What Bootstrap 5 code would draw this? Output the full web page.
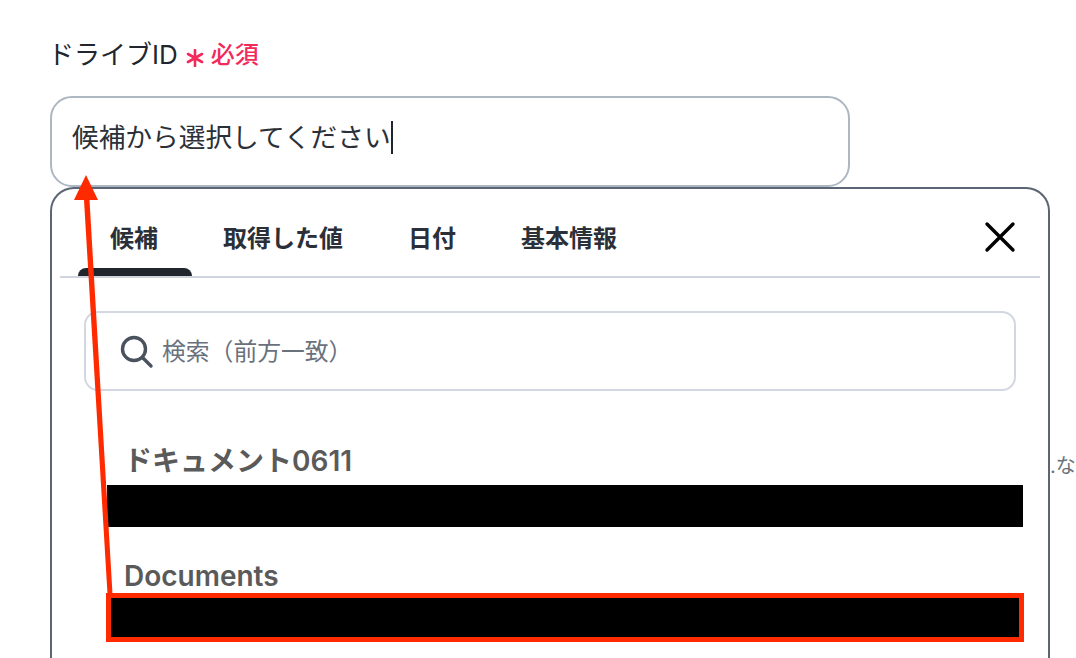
<!DOCTYPE html>
<html lang="ja">
<head>
  <meta charset="UTF-8" />
  <title>ドライブID</title>
  <link href="https://cdn.jsdelivr.net/npm/bootstrap@5.3.3/dist/css/bootstrap.min.css" rel="stylesheet" />
  <style>
    html, body { height: 658px; overflow: hidden; }
    body {
      background: #fff;
      font-family: Inter, "Noto Sans CJK JP", sans-serif;
      color: #21262e;
      position: relative;
    }
    .page-wrap { padding: 37px 0 0 50px; height: 658px; overflow: hidden; }
    .field-label { font-size: 26px; line-height: 36px; height: 36px; margin: 0 0 23px -2px; gap: 8px; }
    .req-mark { color: #f2295b; font-size: 24px; font-weight: 500; gap: 7px; }
    .req-star { width: 18px; height: 18px; margin-top: 6px; }
    .fake-input {
      width: 800px; height: 91px;
      border: 2px solid #adb7c2; border-radius: 22px;
      padding: 0 20px 8px;
      font-size: 26.7px; color: #2b3038;
    }
    .fake-caret { width: 2px; height: 33px; background: #21262e; }
    .picker-panel {
      width: 1000px; flex: none; height: 520px;
      border: 2px solid #5b6573; border-radius: 24px 24px 0 0;
      border-bottom: 0;
      padding: 0 8px;
      position: relative; z-index: 1;
    }
    .tab-bar { height: 89px; border-bottom: 2px solid #d0d4de; padding-left: 18px; }
    .tab-item {
      font-size: 24px; font-weight: 700; color: #2b3038;
      padding: 30px 33px 0 32px; height: 87px; line-height: 40px; text-align: center;
    }
    .tab-item.is-on { position: relative; padding-right: 34px; margin-right: -1px; }
    .tab-item.is-on::after {
      content: ""; position: absolute; left: 0; right: 0; bottom: 0; height: 8px;
      background: #21262e; border-radius: 8px 8px 0 0;
    }
    .tab-close { width: 32px; height: 32px; margin: 32px 24px 0 auto; }
    .search-box {
      height: 80px; margin: 33px 24px 0 24px;
      border: 2px solid #d3d7e2; border-radius: 14px;
      padding: 2px 0 0 34px; gap: 8px;
      font-size: 23.8px; color: #69717d;
    }
    .result-list { padding: 0 17px 0 47px; margin-top: 50px; }
    .result-name { font-size: 28px; font-weight: 600; color: #5a5a5a; line-height: 40px; margin-left: 17px; }
    .result-bar { background: #000; height: 42px; margin-top: 4px; }
    .result-bar.is-marked { height: 49px; border: 5px solid #ff2a00; margin: -3px -1px 0; }
    .result-gap { margin-top: 29px; }
    .side-text { font-size: 20px; color: #69717d; margin-top: 264px; white-space: nowrap; }
    .call-arrow { position: absolute; left: 0; top: 0; width: 1076px; height: 658px; pointer-events: none; z-index: 2; }
  </style>
</head>
<body>
  <div class="page-wrap">
    <div class="field-label d-flex align-items-center">
      <span>ドライブID</span>
      <span class="req-mark d-flex align-items-center">
        <svg class="req-star" viewBox="0 0 18 18" fill="none" stroke="#f2295b" stroke-width="2.6" stroke-linecap="round">
          <path d="M9 1v16M2 5l14 8M16 5L2 13"/>
        </svg>
        <span>必須</span>
      </span>
    </div>

    <div class="fake-input d-flex align-items-center">
      <span>候補から選択してください</span><span class="fake-caret"></span>
    </div>

    <div class="d-flex">
      <div class="picker-panel bg-white">
        <div class="tab-bar d-flex">
          <div class="tab-item is-on">候補</div>
          <div class="tab-item">取得した値</div>
          <div class="tab-item">日付</div>
          <div class="tab-item">基本情報</div>
          <svg class="tab-close" viewBox="0 0 32 32" fill="none" stroke="#000" stroke-width="3.4" stroke-linecap="round">
            <path d="M3 3l26 26M29 3L3 29"/>
          </svg>
        </div>
        <div class="search-box d-flex align-items-center">
          <svg width="34" height="34" viewBox="0 0 34 34" fill="none" stroke="#4a525e" stroke-width="3.4" stroke-linecap="round">
            <circle cx="14" cy="14" r="11.5"/>
            <path d="M23 23l8 8"/>
          </svg>
          <span>検索（前方一致）</span>
        </div>
        <div class="result-list">
          <div class="result-name">ドキュメント0611</div>
          <div class="result-bar"></div>
          <div class="result-name result-gap">Documents</div>
          <div class="result-bar is-marked"></div>
        </div>
      </div>
      <div class="side-text">.な</div>
    </div>
  </div>

  <svg class="call-arrow" viewBox="0 0 1076 658" fill="#ff2a00">
    <path d="M86 175L98 200H89.5L112.5 594H107.5L84 200H74Z"/>
  </svg>

  <script src="https://cdn.jsdelivr.net/npm/bootstrap@5.3.3/dist/js/bootstrap.bundle.min.js"></script>
</body>
</html>
